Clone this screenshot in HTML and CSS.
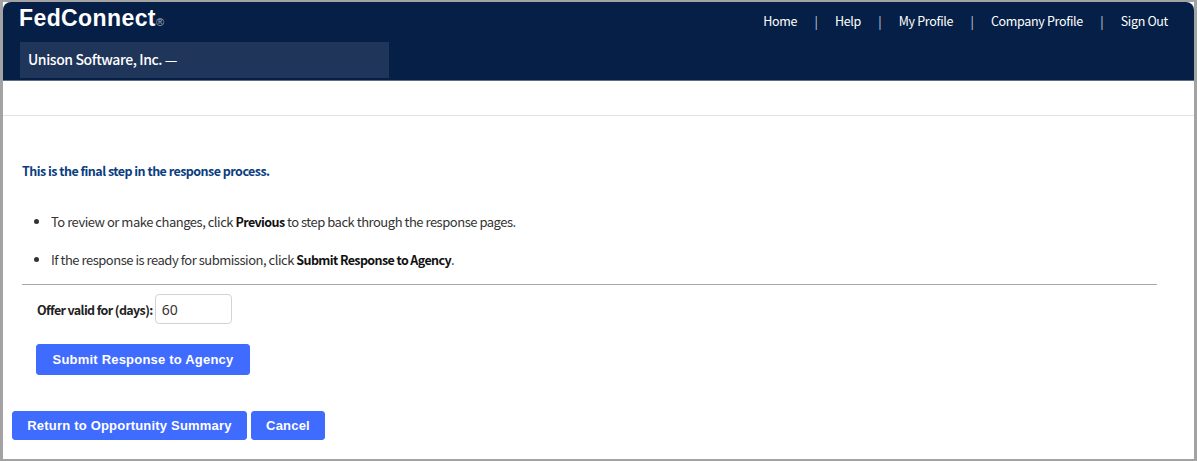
FILE: index.html
```html
<!DOCTYPE html>
<html lang="en">
<head>
<meta charset="utf-8">
<title>FedConnect</title>
<link rel="stylesheet" href="styles.css">
</head>
<body>
<div class="frame">
  <header class="header">
    <div class="brand-col">
      <div class="logo">FedConnect<span class="reg">®</span></div>
      <div class="company">Unison Software, Inc. —</div>
    </div>
    <nav class="nav">
      <a>Home</a><span class="sep">|</span>
      <a>Help</a><span class="sep">|</span>
      <a>My Profile</a><span class="sep">|</span>
      <a>Company Profile</a><span class="sep">|</span>
      <a>Sign Out</a>
    </nav>
  </header>
  <div class="subbar"></div>
  <main class="content">
    <p class="lead">This is the final step in the response process.</p>
    <ul class="steps">
      <li>To review or make changes, click <b>Previous</b> to step back through the response pages.</li>
      <li>If the response is ready for submission, click <b>Submit Response to Agency</b>.</li>
    </ul>
    <div class="form">
      <div class="offer">
        <label class="offer-label" for="days">Offer valid for (days):</label>
        <input class="offer-input" id="days" type="text" value="60">
      </div>
      <button class="btn btn-submit" type="button">Submit Response to Agency</button>
    </div>
    <div class="actions">
      <button class="btn btn-return" type="button">Return to Opportunity Summary</button>
      <button class="btn btn-cancel" type="button">Cancel</button>
    </div>
  </main>
</div>
</body>
</html>
```
FILE: styles.css
```css
* { box-sizing: border-box; }
html, body { margin: 0; padding: 0; height: 100%; background: #a3a3a3; }
body { font-family: "Noto Sans CJK SC", "Noto Sans", sans-serif; font-size: 14px; color: #222; overflow: hidden; }
.frame { width: 1197px; height: 461px; border: solid #a3a3a3; border-width: 2px 3px 2px 3px; background: #fff; overflow: hidden; }
.header { height: 79px; background: #051f47; border-bottom: 1px solid #5d6f88; border-radius: 8px 8px 0 0; display: flex; justify-content: space-between; align-items: flex-start; }
.brand-col { padding-left: 17px; }
.logo { height: 40px; margin-left: -1px; font-family: "Liberation Sans", Arial, sans-serif; font-weight: 700; font-size: 23px; line-height: 32px; letter-spacing: 0.4px; color: #fff; white-space: nowrap; }
.reg { font-size: 11px; font-weight: 400; color: #a9b2bf; letter-spacing: 0; margin-left: 0; }
.company { width: 369px; height: 36px; padding-left: 8px; background: #20355a; color: #fff; font-weight: 500; font-size: 14px; line-height: 35px; letter-spacing: -0.4px; white-space: nowrap; }
.nav { display: flex; align-items: center; height: 37px; padding-right: 26px; color: #fff; font-size: 12.5px; letter-spacing: -0.33px; white-space: nowrap; }
.nav a { color: #fff; }
.sep { margin: 0 17.4px; color: #c8d3e0; }
.subbar { height: 35px; border-bottom: 1px solid #e3e3e3; }
.content { padding: 0 0 0 19px; }
.lead { margin: 45px 0 0; height: 20px; line-height: 20px; font-size: 12.5px; font-weight: 700; letter-spacing: -0.53px; color: #0a3d80; }
.steps { margin: 31px 0 0; padding: 0 0 0 29px; width: 1135px; height: 73px; border-bottom: 1px solid #a8a8a8; list-style: disc; }
.steps li { height: 38px; line-height: 20px; font-size: 13px; letter-spacing: -0.48px; color: #333; }
.steps b { font-size: 12.5px; font-weight: 700; letter-spacing: -0.6px; color: #111; }
.form { padding-left: 14px; }
.offer { display: flex; align-items: center; gap: 2px; margin-top: 9px; height: 30px; }
.offer-label { font-size: 12.5px; font-weight: 700; letter-spacing: -0.63px; margin-left: 1px; color: #222; }
.offer-input { width: 77px; height: 30px; border: 1px solid #ced4da; border-radius: 4px; padding: 0 6px; font-family: "Noto Sans", sans-serif; font-size: 14px; color: #333; background: #fff; }
.btn { display: block; border: 1px solid #3f6bff; border-radius: 3px; background: #3f6bff; color: #fff; font-family: "Liberation Sans", Arial, sans-serif; font-weight: 700; font-size: 13px; padding: 0; white-space: nowrap; letter-spacing: 0.2px; }
.btn-submit { width: 214px; height: 31px; margin-top: 20px; }
.actions { display: flex; gap: 4px; margin: 36px 0 0 -10px; }
.btn-return { width: 235px; height: 29px; }
.btn-cancel { width: 74px; height: 29px; }
```
